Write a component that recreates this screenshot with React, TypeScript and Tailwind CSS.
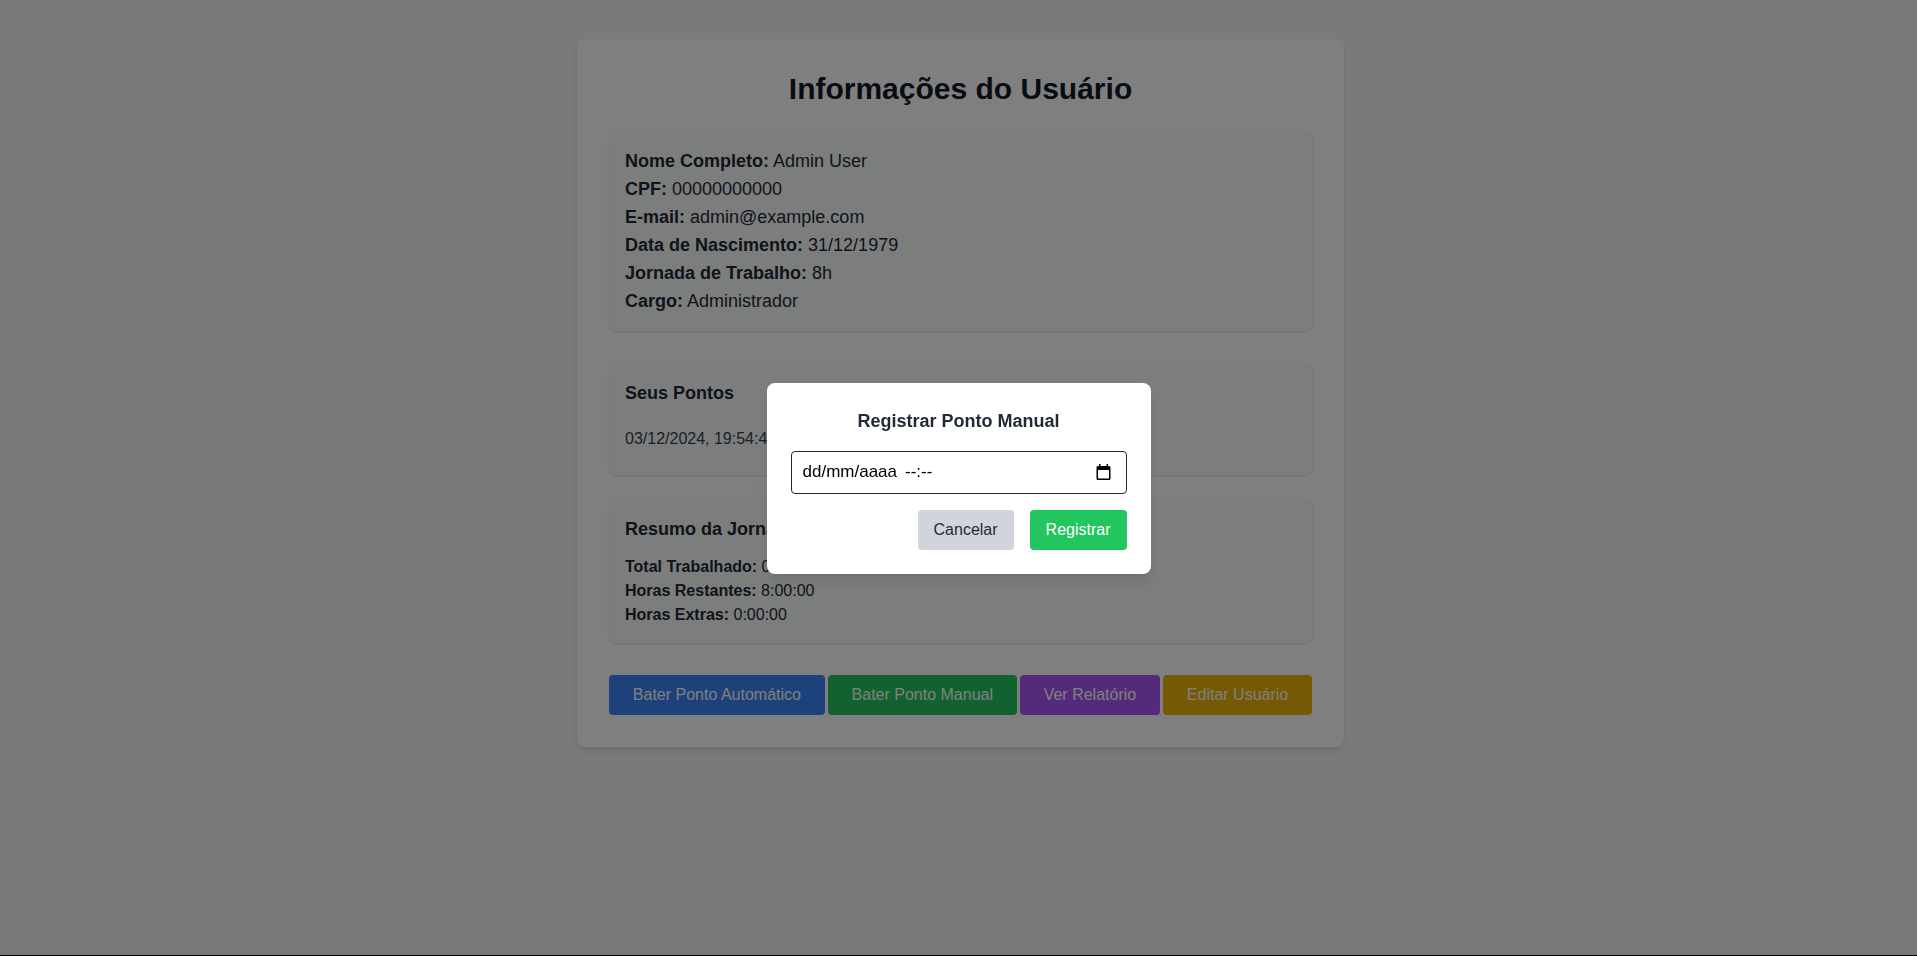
import React from "react";

function Label({ k, v }: { k: string; v: string }) {
  return (
    <p>
      <span className="font-bold">{k}</span> {v}
    </p>
  );
}

export default function App() {
  return (
    <div
      className="min-h-screen bg-[#f3f4f6] pt-[39px] pl-[4px] text-[#1f2937]"
      style={{ fontFamily: '"Liberation Sans", Arial, sans-serif' }}
    >
      <div className="w-[767px] mx-auto bg-white rounded-lg shadow-md p-8">
        <h1 className="text-3xl font-bold text-center mb-6 text-[#111827]">Informações do Usuário</h1>

        <div className="bg-[#f9fafb] rounded-lg shadow p-4 mb-8 text-lg">
          <Label k="Nome Completo:" v="Admin User" />
          <Label k="CPF:" v="00000000000" />
          <Label k="E-mail:" v="admin@example.com" />
          <Label k="Data de Nascimento:" v="31/12/1979" />
          <Label k="Jornada de Trabalho:" v="8h" />
          <Label k="Cargo:" v="Administrador" />
        </div>

        <div className="bg-[#f9fafb] rounded-lg shadow p-4 mb-6">
          <h2 className="text-lg font-bold mb-3">Seus Pontos</h2>
          <ul>
            <li className="py-2 text-[#374151]">03/12/2024, 19:54:41 - Entrada</li>
          </ul>
        </div>

        <div className="bg-[#f9fafb] rounded-lg shadow p-4">
          <h2 className="text-lg font-bold mb-3">Resumo da Jornada</h2>
          <Label k="Total Trabalhado:" v="0:00:00" />
          <Label k="Horas Restantes:" v="8:00:00" />
          <Label k="Horas Extras:" v="0:00:00" />
        </div>

        <div className="flex gap-[3px] mt-8">
          <button className="grow bg-[#3b82f6] text-white px-4 py-2 rounded">Bater Ponto Automático</button>
          <button className="grow bg-[#22c55e] text-white px-4 py-2 rounded">Bater Ponto Manual</button>
          <button className="grow bg-[#a855f7] text-white px-4 py-2 rounded">Ver Relatório</button>
          <button className="grow bg-[#eab308] text-white px-4 py-2 rounded">Editar Usuário</button>
        </div>
      </div>

      <div className="fixed inset-0 bg-black/50 flex items-center justify-center">
        <div className="bg-white p-6 rounded-lg shadow-lg w-96">
          <h3 className="text-lg font-bold text-center mb-4 text-[#1f2937]">Registrar Ponto Manual</h3>
          <div className="flex items-center border border-[#1f2937] rounded h-[43px] pl-[11px] pr-[15px] mb-4 text-black text-[17px]">
            <span>dd/mm/aaaa</span>
            <span className="ml-[8px]">--:--</span>
            <span className="ml-auto flex">
              <svg width="15" height="16" viewBox="0 0 15 16">
                <path
                  fillRule="evenodd"
                  fill="#000"
                  d="M3 0h1.5v2h6V0H12v2h1a1.5 1.5 0 0 1 1.5 1.5v11A1.5 1.5 0 0 1 13 16H2a1.5 1.5 0 0 1-1.5-1.5v-11A1.5 1.5 0 0 1 2 2h1z M2 6v8.5h11V6z"
                />
              </svg>
            </span>
          </div>
          <div className="flex justify-end gap-4">
            <button className="bg-[#d1d5db] text-[#1f2937] px-4 py-2 rounded">Cancelar</button>
            <button className="bg-[#22c55e] text-white px-4 py-2 rounded">Registrar</button>
          </div>
        </div>
      </div>
      <div className="fixed bottom-0 left-0 right-0 h-px bg-black" />
    </div>
  );
}
